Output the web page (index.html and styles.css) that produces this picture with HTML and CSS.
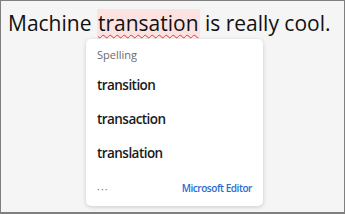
FILE: index.html
```html
<!DOCTYPE html>
<html>
<head>
<meta charset="utf-8">
<link rel="stylesheet" href="styles.css">
</head>
<body>
<div class="frame">
  <p class="sentence">Machine <span class="err">transation</span> is really cool.</p>
  <div class="menu">
    <div class="menu-title">Spelling</div>
    <div class="item">transition</div>
    <div class="item">transaction</div>
    <div class="item">translation</div>
    <div class="footer">
      <span class="more">···</span>
      <span class="editor">Microsoft Editor</span>
    </div>
  </div>
</div>
</body>
</html>
```
FILE: styles.css
```css
html, body {
  margin: 0;
  padding: 0;
}
body {
  width: 345px;
  height: 214px;
  font-family: "Open Sans", "Noto Sans", sans-serif;
}
.frame {
  position: relative;
  box-sizing: border-box;
  width: 345px;
  height: 214px;
  background: #f5f5f5;
  border: 1px solid #7f7f7f;
  border-bottom-width: 2px;
  overflow: hidden;
}
.sentence {
  margin: 0;
  padding: 9px 0 0 7px;
  font-size: 21px;
  line-height: 26px;
  color: #111;
  white-space: nowrap;
}
.err {
  background: #fde2e2;
  padding: 0 1px;
  text-decoration: underline wavy #e23b3b;
  text-decoration-thickness: 1px;
  text-underline-offset: 3px;
}
.menu {
  position: absolute;
  left: 85px;
  top: 38px;
  width: 177px;
  height: 167px;
  box-sizing: border-box;
  background: #fff;
  border-radius: 5px;
  box-shadow: 0 1px 4px rgba(0,0,0,0.18);
  padding: 8px 11px 0 11px;
  display: flex;
  flex-direction: column;
}
.menu-title {
  font-size: 11px;
  line-height: 16px;
  color: #6b6b6b;
  height: 16px;
  margin-bottom: 5px;
}
.item {
  font-size: 13.5px;
  font-weight: 600;
  letter-spacing: -0.55px;
  color: #1a1a1a;
  height: 34px;
  line-height: 34px;
}
.footer {
  display: flex;
  justify-content: space-between;
  align-items: center;
  margin-top: 8px;
  height: 20px;
}
.more {
  font-size: 11px;
  color: #777;
  letter-spacing: 1px;
}
.editor {
  font-size: 10px;
  font-weight: 600;
  letter-spacing: -0.45px;
  color: #2a6ccf;
}
```
